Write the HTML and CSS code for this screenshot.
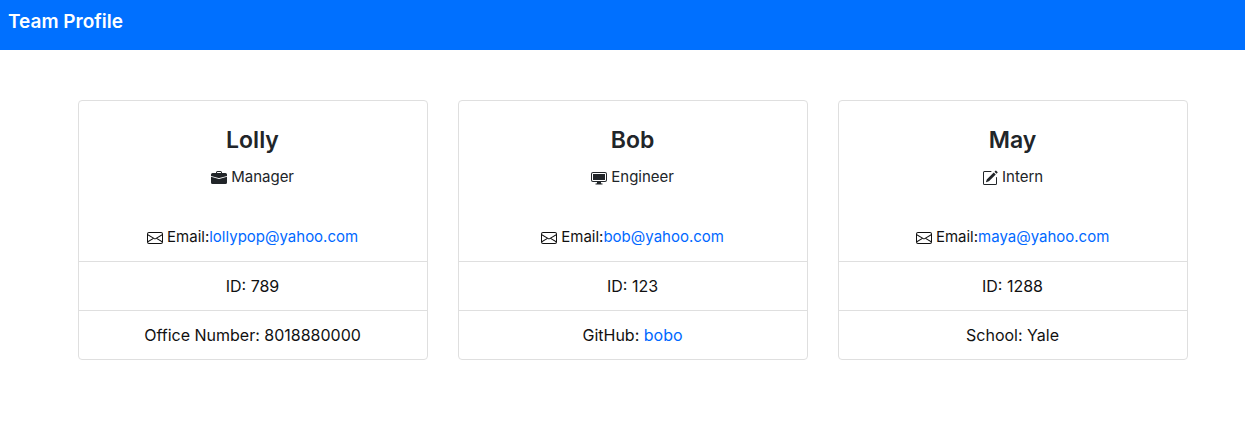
FILE: index.html
```html
<!DOCTYPE html>
<html lang="en">
<head>
<meta charset="utf-8">
<meta name="viewport" content="width=device-width, initial-scale=1">
<title>Team Profile</title>
<link rel="stylesheet" href="styles.css">
</head>
<body>
<svg class="sprite" aria-hidden="true">
<symbol id="envelope" viewBox="0 0 16 16"><path fill-rule="evenodd" d="M0 4a2 2 0 0 1 2-2h12a2 2 0 0 1 2 2v8a2 2 0 0 1-2 2H2a2 2 0 0 1-2-2V4zm2-1a1 1 0 0 0-1 1v.217l7 4.2 7-4.2V4a1 1 0 0 0-1-1H2zm13 2.383l-4.758 2.855L15 11.114v-5.73zm-.034 6.878L9.271 8.82 8 9.583 6.728 8.82l-5.694 3.44A1 1 0 0 0 2 13h12a1 1 0 0 0 .966-.739zM1 11.114l4.758-2.876L1 5.383v5.73z"/></symbol>
</svg>
<header class="navbar"><h1 class="brand">Team Profile</h1></header>
<main class="team">
<article class="card">
<div class="card-body">
<h2 class="name">Lolly</h2>
<p class="role"><svg class="icon" viewBox="0 0 16 16" aria-hidden="true"><path fill-rule="evenodd" d="M0 12.5A1.5 1.5 0 0 0 1.5 14h13a1.5 1.5 0 0 0 1.5-1.5V6.85L8.129 8.947a.5.5 0 0 1-.258 0L0 6.85v5.65z"/><path fill-rule="evenodd" d="M0 4.5A1.5 1.5 0 0 1 1.5 3h13A1.5 1.5 0 0 1 16 4.5v1.384l-7.614 2.03a1.5 1.5 0 0 1-.772 0L0 5.884V4.5zm5-2A1.5 1.5 0 0 1 6.5 1h3A1.5 1.5 0 0 1 11 2.5V3h-1v-.5a.5.5 0 0 0-.5-.5h-3a.5.5 0 0 0-.5.5V3H5v-.5z"/></svg> Manager</p>
</div>
<ul class="details">
<li class="detail email"><svg class="icon" aria-hidden="true"><use href="#envelope"/></svg> Email:<a class="link" href="mailto:lollypop@yahoo.com">lollypop@yahoo.com</a></li>
<li class="detail">ID: 789</li>
<li class="detail">Office Number: 8018880000</li>
</ul>
</article>
<article class="card">
<div class="card-body">
<h2 class="name">Bob</h2>
<p class="role"><svg class="icon" viewBox="0 0 16 16" aria-hidden="true"><path fill-rule="evenodd" d="M14 3H2a1 1 0 0 0-1 1v6a1 1 0 0 0 1 1h12a1 1 0 0 0 1-1V4a1 1 0 0 0-1-1zM2 2a2 2 0 0 0-2 2v6a2 2 0 0 0 2 2h12a2 2 0 0 0 2-2V4a2 2 0 0 0-2-2H2z"/><path d="M2 4h12v6H2zM6 12h4c0 1 .1 1.500.7 2H5.300C5.900 13.500 6 13 6 12zM4.500 13.500h7v1h-7z"/></svg> Engineer</p>
</div>
<ul class="details">
<li class="detail email"><svg class="icon" aria-hidden="true"><use href="#envelope"/></svg> Email:<a class="link" href="mailto:bob@yahoo.com">bob@yahoo.com</a></li>
<li class="detail">ID: 123</li>
<li class="detail">GitHub: <a class="link" href="https://github.com/bobo">bobo</a></li>
</ul>
</article>
<article class="card">
<div class="card-body">
<h2 class="name">May</h2>
<p class="role"><svg class="icon" viewBox="0 0 16 16" aria-hidden="true"><path d="M15.502 1.940a.5.5 0 0 1 0 .706L14.459 3.690l-2-2L13.502.646a.5.5 0 0 1 .707 0l1.293 1.293zm-1.750 2.456l-2-2L4.939 9.210a.5.5 0 0 0-.121.196l-.805 2.414a.25.25 0 0 0 .316.316l2.414-.805a.5.5 0 0 0 .196-.120l6.813-6.814z"/><path fill-rule="evenodd" d="M1 13.500A1.500 1.500 0 0 0 2.500 15h11a1.500 1.500 0 0 0 1.500-1.500v-6a.5.5 0 0 0-1 0v6a.5.5 0 0 1-.5.5h-11a.5.5 0 0 1-.5-.5v-11a.5.5 0 0 1 .5-.5H9a.5.5 0 0 0 0-1H2.500A1.500 1.500 0 0 0 1 2.500v11z"/></svg> Intern</p>
</div>
<ul class="details">
<li class="detail email"><svg class="icon" aria-hidden="true"><use href="#envelope"/></svg> Email:<a class="link" href="mailto:maya@yahoo.com">maya@yahoo.com</a></li>
<li class="detail">ID: 1288</li>
<li class="detail">School: Yale</li>
</ul>
</article>
</main>
</body>
</html>
```
FILE: styles.css
```css
* { box-sizing: border-box; }
body {
  margin: 0;
  font: 400 16px/24px Inter, "Liberation Sans", sans-serif;
  color: #212529;
  background: #fff;
}
.sprite { display: none; }
.navbar { padding: 7px 8px 13px; background: #0070ff; }
.brand { margin: 0; font-size: 19px; line-height: 30px; font-weight: 600; color: #fff; }
.team {
  display: grid;
  grid-template-columns: repeat(3, 1fr);
  gap: 30px;
  max-width: 1140px;
  margin: 50px auto;
  padding: 0 5px 0 25px;
}
.card { border: 1px solid #dfdfdf; border-radius: 4px; text-align: center; }
.card-body { padding: 24px 20px; }
.name { margin: 0 0 10px; font-size: 23px; line-height: 30px; font-weight: 600; }
.role { margin: 0; font-size: 15px; }
.icon { width: 16px; height: 16px; fill: currentColor; vertical-align: middle; }
.details { list-style: none; margin: 0; padding: 0; }
.detail { padding: 12px 20px; border-bottom: 1px solid #dfdfdf; color: #111; }
.detail:last-child { border-bottom: 0; }
.email { font-size: 15px; }
.link { color: #0068ff; text-decoration: none; }
```
